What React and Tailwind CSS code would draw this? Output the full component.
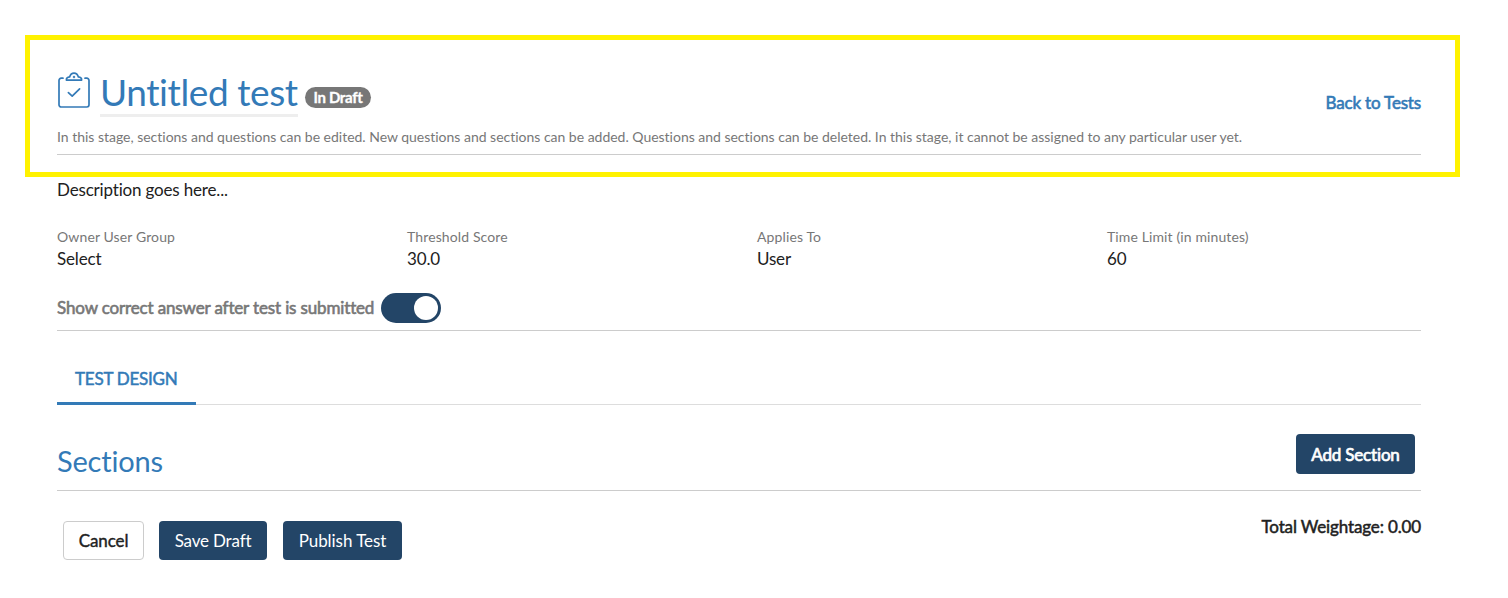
import React from "react";

const fields = [
  { label: "Owner User Group", value: "Select" },
  { label: "Threshold Score", value: "30.0" },
  { label: "Applies To", value: "User" },
  { label: "Time Limit (in minutes)", value: "60" },
];

function ClipboardIcon() {
  return (
    <svg className="mt-px" width="34" height="38" viewBox="0 0 34 38" fill="none" stroke="#337ab7" strokeWidth="1.7" strokeLinecap="round" strokeLinejoin="round">
      <path d="M6 6.2H4.2A2.2 2.2 0 0 0 2 8.4V32.8A2.2 2.2 0 0 0 4.2 35H29.8A2.2 2.2 0 0 0 32 32.8V8.4A2.2 2.2 0 0 0 29.8 6.2H28" />
      <path d="M9.4 8.2C9.1 6.2 10.5 5.2 12.6 4.9C13.4 2.4 15 1.1 17 1.1S20.6 2.4 21.4 4.9C23.5 5.2 24.9 6.2 24.6 8.2Z" />
      <circle cx="17" cy="5" r="0.4" />
      <path d="M11.4 20.6L15.2 24.2L22.6 16.8" />
    </svg>
  );
}

export default function App() {
  return (
    <main className="flex h-[598px] w-[1508px] flex-col overflow-hidden bg-white pt-[35px] font-['Lato',sans-serif] text-[17px] leading-6 tracking-[-0.17px] text-[#212121] [font-variant-ligatures:none]">
      <header className="ml-[25px] h-[142px] w-[1435px] shrink-0 border-[5px] border-[#fff200] pr-[34px] pl-[27px]">
        <div className="flex h-[77px] pt-[31px]">
          <ClipboardIcon />
          <h1 className="ml-[9px] h-[46px] w-[198px] border-b-3 border-[#eeeeee] text-[37px] leading-[41px] tracking-[-0.4px] whitespace-nowrap text-[#337ab7]">Untitled test</h1>
          <span className="mt-[16px] ml-[7px] flex h-[21px] w-[66px] items-center justify-center rounded-full bg-[#777777] text-[15px] leading-none font-bold tracking-[-0.35px] whitespace-nowrap text-white [-webkit-text-stroke:0.3px]">In Draft</span>
          <a className="mt-[20px] ml-auto whitespace-nowrap text-[#337ab7] [-webkit-text-stroke:0.6px]">Back to Tests</a>
        </div>
        <div className="flex h-[38px] items-center border-b border-[#cccccc] pt-[2px] text-[14px] tracking-[-0.014px] whitespace-nowrap text-[#777777]">
          <p>In this stage, sections and questions can be edited. New questions and sections can be added. Questions and sections can be deleted. In this stage, it cannot be assigned to any particular user yet.</p>
        </div>
      </header>
      <div className="ml-[57px] w-[1364px]">
        <p className="h-[48px] pt-[1px]">Description goes here...</p>
        <dl className="grid grid-cols-[350px_350px_350px_1fr]">
          {fields.map((f) => (
            <div key={f.label}>
              <dt className="h-[22px] text-[14px] tracking-[0.12px] text-[#777777]">{f.label}</dt>
              <dd className="h-[24px]">{f.value}</dd>
            </div>
          ))}
        </dl>
        <div className="flex h-[60px] items-end border-b border-[#cccccc] pb-[7px]">
          <div className="flex items-center">
            <span className="w-[324px] tracking-[-0.145px] whitespace-nowrap text-[#777777] [-webkit-text-stroke:0.6px]">Show correct answer after test is submitted</span>
            <button role="switch" aria-checked="true" className="flex h-[30px] w-[60px] items-center justify-end rounded-full bg-[#234567] pr-[3px]">
              <span className="size-[24px] rounded-full bg-white" />
            </button>
          </div>
        </div>
        <nav className="flex h-[74px] items-end border-b border-[#dddddd]">
          <a className="-mb-px h-[38px] w-[139px] border-b-3 border-[#337ab7] pl-[18px] tracking-[-0.23px] whitespace-nowrap text-[#337ab7] [-webkit-text-stroke:0.5px]">TEST DESIGN</a>
        </nav>
        <section className="flex h-[86px] items-start justify-between border-b border-[#cccccc] pt-[29px] pr-[6px]">
          <h2 className="text-[29px] leading-[54px] text-[#337ab7]">Sections</h2>
          <button className="h-[40px] w-[119px] rounded-[4px] bg-[#234567] pt-[2px] whitespace-nowrap text-white [-webkit-text-stroke:0.7px]">Add Section</button>
        </section>
        <footer className="flex pt-[30px] pl-[6px]">
          <button className="h-[39px] w-[81px] rounded-[4px] border border-[#cccccc] bg-white pt-[1px] tracking-[-0.1px] [-webkit-text-stroke:0.4px]">Cancel</button>
          <button className="ml-[15px] h-[39px] w-[108px] rounded-[4px] bg-[#234567] pt-[1px] text-white">Save Draft</button>
          <button className="ml-[16px] h-[39px] w-[119px] rounded-[4px] bg-[#234567] pt-[1px] tracking-[-0.05px] text-white">Publish Test</button>
          <span className="-mt-[6px] ml-auto tracking-[-0.14px] [-webkit-text-stroke:0.5px]">Total Weightage: 0.00</span>
        </footer>
      </div>
    </main>
  );
}
